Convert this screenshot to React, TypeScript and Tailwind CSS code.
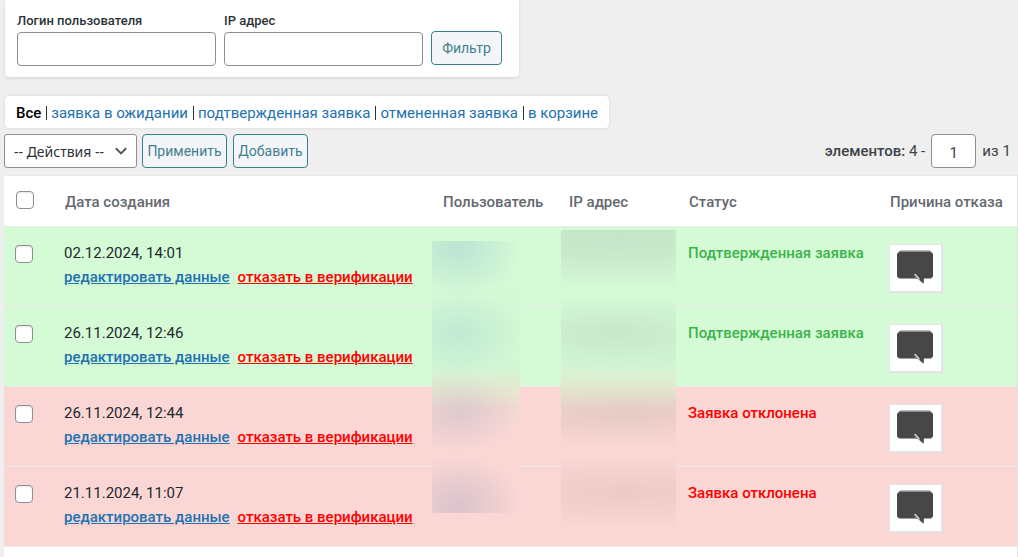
import React from "react";

type Status = "confirmed" | "rejected";

interface Request {
  id: number;
  created: string;
  status: Status;
}

const requests: Request[] = [
  { id: 1, created: "02.12.2024, 14:01", status: "confirmed" },
  { id: 2, created: "26.11.2024, 12:46", status: "confirmed" },
  { id: 3, created: "26.11.2024, 12:44", status: "rejected" },
  { id: 4, created: "21.11.2024, 11:07", status: "rejected" },
];

const filters = ["заявка в ожидании", "подтвержденная заявка", "отмененная заявка", "в корзине"];

const buttonClass =
  "h-[34px] rounded-[4px] border border-[#35808f] bg-[#f3f5f8] text-[14px] leading-5 text-[#43808f]";
const checkboxClass =
  "block size-[18px] appearance-none rounded-[4px] border border-[#8c8f94] bg-white shadow-[inset_0_1px_2px_rgba(0,0,0,0.1)] checked:bg-[#2271b1]";
const inputClass = "h-[34px] rounded-[4px] border border-[#8c8f94] bg-white";

function CommentIcon() {
  return (
    <svg viewBox="0 0 36 34" className="h-[34px] w-9" aria-hidden="true">
      <path d="M3 .3h30l1.500 2h-33z" fill="#a3a3a3" />
      <path d="M2 1.800h32L36 4v22.500l-2 2h-7.200v4.800h-.8L20.500 28.500H2l-2-2V4z" fill="#474747" />
      <path d="M17 24.200l1.600-.4 3.800 4.400.2 1.900-1.600-1.400z" fill="#d6d6d6" />
      <path d="M17.200 25l3.800 3.700h-2.600z" fill="#8a8a8a" />
    </svg>
  );
}

function HiddenUsers() {
  return (
    <div
      aria-hidden="true"
      className="absolute top-[14px] left-0 z-10 h-[272px] w-[88px] bg-[radial-gradient(64px_48px_at_26px_6px,rgba(130,170,205,0.28),rgba(130,170,205,0.18)_40%,transparent),radial-gradient(64px_42px_at_26px_92px,rgba(130,170,205,0.2),rgba(130,170,205,0.12)_40%,transparent),radial-gradient(64px_40px_at_26px_172px,rgba(130,140,190,0.2),rgba(130,140,190,0.12)_40%,transparent),radial-gradient(64px_50px_at_26px_264px,rgba(130,140,180,0.26),rgba(130,140,180,0.17)_40%,transparent),linear-gradient(to_bottom,#d4fad6_0,#d1f7d5_125px,#e3ead0_145px,#f4d9d2_168px,#fad7d4_190px)]"
    />
  );
}

function HiddenAddresses() {
  return (
    <div
      aria-hidden="true"
      className="absolute top-[3px] left-[2px] z-10 h-[302px] w-[115px] bg-[radial-gradient(160px_40px_at_60px_14px,rgba(120,110,120,0.06),transparent),radial-gradient(140px_38px_at_55px_103px,rgba(120,110,120,0.12),transparent),radial-gradient(200px_36px_at_65px_184px,rgba(120,100,100,0.1),transparent),radial-gradient(200px_38px_at_65px_262px,rgba(120,100,100,0.11),transparent),linear-gradient(to_bottom,#c9ebcc_0,#cdeed0_25px,#d4fad6_62px,#d1f7d5_130px,#e3ead0_158px,#f2d6d0_180px,#fad7d4_210px)]"
    />
  );
}

function RequestRow({ request, first }: { request: Request; first: boolean }) {
  const confirmed = request.status === "confirmed";
  return (
    <tr className={`h-20 border-b border-[#e9ebe9] align-top ${confirmed ? "bg-[#d4fad6]" : "bg-[#fad7d4]"}`}>
      <td className="pt-[18px] pl-[11px]">
        <input
          type="checkbox"
          aria-label={`Выбрать заявку ${request.created}`}
          className={checkboxClass}
        />
      </td>
      <td className="pt-[14px] pl-[10px]">
        <div className="leading-6 text-[#23282d]">{request.created}</div>
        <div className="flex items-center leading-6 font-medium whitespace-nowrap">
          <a href="#edit" className="text-[#2271b1] underline">
            редактировать данные
          </a>
          <span className="mr-1 ml-[3px] h-3 w-px bg-[#dddddd]" />
          <a href="#reject" className="text-[#ff0000] underline">
            отказать в верификации
          </a>
        </div>
      </td>
      <td className="relative">{first && <HiddenUsers />}</td>
      <td className="relative">{first && <HiddenAddresses />}</td>
      <td
        className={`pt-[14px] pl-[9px] leading-6 font-medium whitespace-nowrap ${confirmed ? "text-[#3cb34c]" : "text-[#ff0000]"}`}
      >
        {confirmed ? "Подтвержденная заявка" : "Заявка отклонена"}
      </td>
      <td className="pt-[17px] pl-[9px]">
        <button
          type="button"
          aria-label="Показать причину отказа"
          className="flex h-12 w-[53px] items-center justify-center border border-[#e5e5e5] bg-white pr-px pb-px shadow-[1px_1px_0_#e2e2e2]"
        >
          <CommentIcon />
        </button>
      </td>
    </tr>
  );
}

export default function App() {
  return (
    <main className="min-h-screen bg-[#efefef] pl-1 font-[Roboto,sans-serif] text-[15px] text-[#3c434a]">
      <form
        onSubmit={(e) => e.preventDefault()}
        className="ml-px flex w-fit items-end gap-2 rounded-b-[4px] bg-white pt-3 pr-[17px] pb-[11px] pl-3 shadow-[0_1px_3px_rgba(0,0,0,0.12)]"
      >
        <div className="flex flex-col gap-[3px]">
          <label htmlFor="login" className="text-[13px] leading-[17px] font-medium text-[#2c3338]">
            Логин пользователя
          </label>
          <input id="login" type="text" className={`w-[199px] ${inputClass}`} />
        </div>
        <div className="flex flex-col gap-[3px]">
          <label htmlFor="ip" className="text-[13px] leading-[17px] font-medium text-[#2c3338]">
            IP адрес
          </label>
          <input id="ip" type="text" className={`w-[199px] ${inputClass}`} />
        </div>
        <button type="submit" className={`mb-px w-[71px] ${buttonClass}`}>
          Фильтр
        </button>
      </form>

      <nav className="mt-[19px] ml-px flex h-8 w-fit items-center rounded-[4px] bg-white px-[11px] pt-[2px] shadow-[0_0_3px_rgba(0,0,0,0.12)]">
        <a href="#all" className="font-medium text-black">
          Все
        </a>
        {filters.map((name) => (
          <React.Fragment key={name}>
            <span className="mr-1 ml-[5px] h-[14px] w-px bg-[#2c3338]" />
            <a href="#filter" className="text-[#2271b1]">
              {name}
            </a>
          </React.Fragment>
        ))}
      </nav>

      <div className="flex items-center justify-between pt-[6px] pr-[7px] pb-2">
        <div className="flex items-center">
          <div className="relative flex items-center">
            <select
              aria-label="Действия"
              className="h-[34px] w-[133px] appearance-none rounded-[3px] border border-[#8c8f94] bg-white pl-[9px] font-['Noto_Sans',sans-serif] text-[14px] text-[#2c3338]"
            >
              <option>-- Действия --</option>
            </select>
            <svg
              viewBox="0 0 12 8"
              className="pointer-events-none absolute right-[10px] h-2 w-3"
              fill="none"
              stroke="#50575e"
              strokeWidth="2"
              aria-hidden="true"
            >
              <path d="M.8 1.200L6 6.400l5.200-5.200" />
            </svg>
          </div>
          <button type="button" className={`ml-[5px] w-[85px] ${buttonClass}`}>
            Применить
          </button>
          <button type="button" className={`ml-[6px] w-[75px] ${buttonClass}`}>
            Добавить
          </button>
        </div>
        <div className="flex items-center gap-[6px]">
          <span>
            <span className="font-medium">элементов:</span> 4 -
          </span>
          <input
            type="text"
            aria-label="Текущая страница"
            defaultValue="1"
            className={`w-[45px] pt-[3px] text-center text-[15px] ${inputClass}`}
          />
          <span className="flex gap-1">
            <span>из</span>
            <span>1</span>
          </span>
        </div>
      </div>

      <div className="border-r border-[#e2e2e2] bg-white pb-[11px] shadow-[0_-1px_0_#e8e8e8]">
        <table className="w-full table-fixed border-collapse">
          <colgroup>
            <col className="w-[50px]" />
            <col />
            <col className="w-[127px]" />
            <col className="w-[120px]" />
            <col className="w-[201px]" />
            <col className="w-[137px]" />
          </colgroup>
          <thead>
            <tr className="h-[50px] border-b border-[#e9ebe9] text-left text-[#646970]">
              <th className="pb-[2px] pl-3">
                <input type="checkbox" aria-label="Выбрать все" className={checkboxClass} />
              </th>
              <th className="pt-[2px] pl-[11px] font-medium">Дата создания</th>
              <th className="pt-[2px] pl-[11px] font-medium">Пользователь</th>
              <th className="pt-[2px] pl-[10px] font-medium">IP адрес</th>
              <th className="pt-[2px] pl-[10px] font-medium">Статус</th>
              <th className="pt-[2px] pl-[10px] font-medium whitespace-nowrap">Причина отказа</th>
            </tr>
          </thead>
          <tbody>
            {requests.map((request, index) => (
              <RequestRow key={request.id} request={request} first={index === 0} />
            ))}
          </tbody>
        </table>
      </div>
    </main>
  );
}
